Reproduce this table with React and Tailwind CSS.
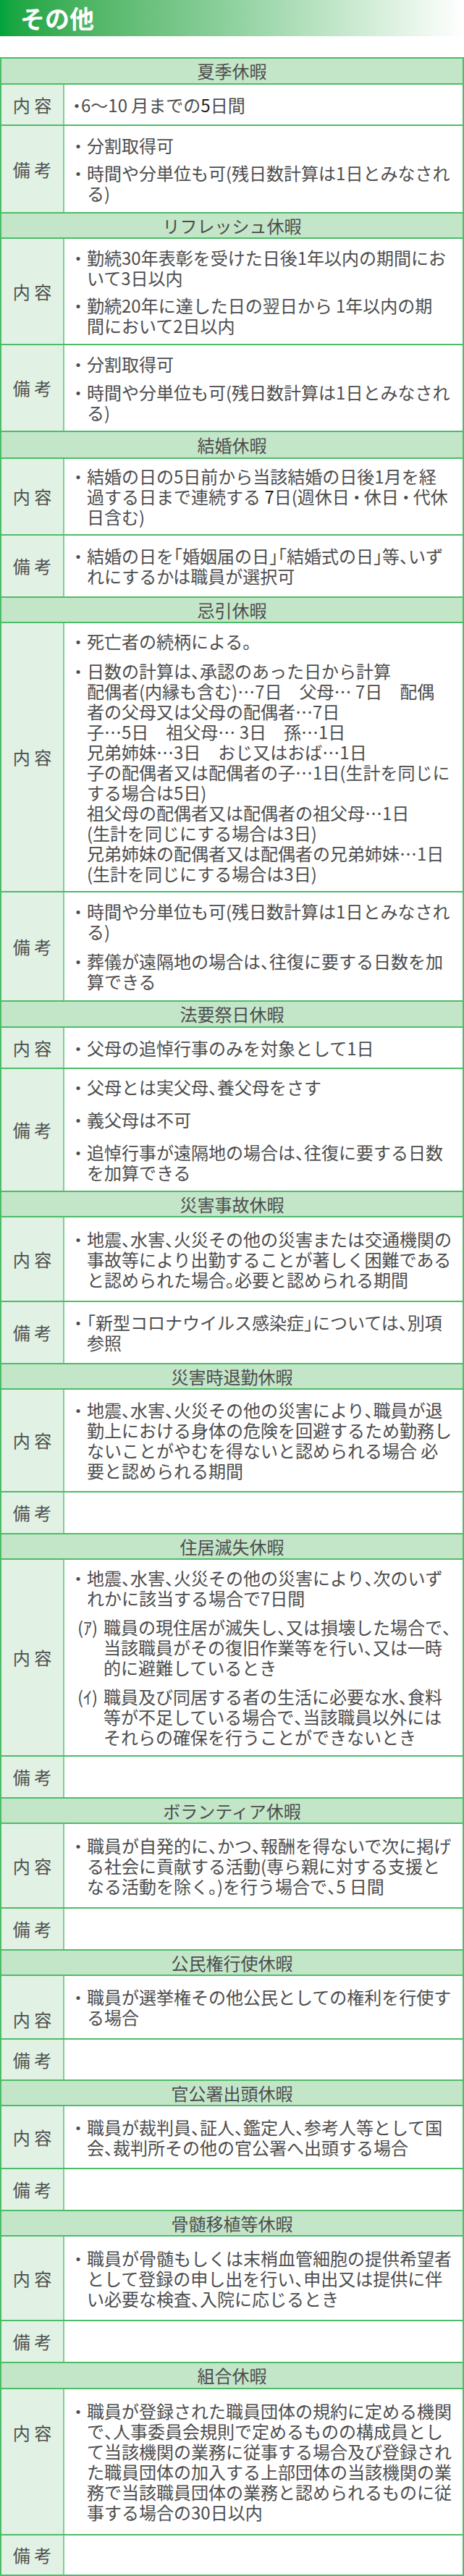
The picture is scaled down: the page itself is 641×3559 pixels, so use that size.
import React from "react";

// punctuation gets half-width (halt) like the original print layout
function fmt(s) {
  if (typeof s !== "string") return s;
  return s.split(/([、。「」・])/).map((p, i) =>
    /^[、。「」・]$/.test(p) ? (
      <span key={i} className="[font-feature-settings:'halt']">
        {p}
      </span>
    ) : (
      p
    )
  );
}

const DARK = "text-[#1f1f1f]";

const remarks = [
  { lines: ["分割取得可"] },
  { lines: ["時間や分単位も可(残日数計算は1日とみなされ", "る)"] },
];

const sections = [
  {
    title: "夏季休暇",
    h: "h-[36px]",
    rows: [
      {
        label: "内 容",
        h: "h-[57px]",
        custom: (
          <div className="flex whitespace-nowrap">
            <span className="-ml-[2px] w-[18px] shrink-0">・</span>
            <span>
              6～10 月までの<span className={DARK}>5</span>日間
            </span>
          </div>
        ),
      },
      { label: "備 考", h: "h-[121px]", gap: "gap-[10px]", items: remarks },
    ],
  },
  {
    title: "リフレッシュ休暇",
    h: "h-[35px]",
    rows: [
      {
        label: "内 容",
        h: "h-[147px]",
        gap: "gap-[10px]",
        items: [
          { lines: ["勤続30年表彰を受けた日後1年以内の期間にお", "いて3日以内"] },
          { lines: ["勤続20年に達した日の翌日から 1年以内の期", "間において2日以内"] },
        ],
      },
      { label: "備 考", h: "h-[120px]", gap: "gap-[11px]", items: remarks },
    ],
  },
  {
    title: "結婚休暇",
    h: "h-[37px]",
    rows: [
      {
        label: "内 容",
        h: "h-[106px]",
        items: [
          {
            lines: [
              "結婚の日の5日前から当該結婚の日後1月を経",
              <>
                過する日まで連続する <span className={DARK}>7</span>日(週休日
                <span className="-mx-[2px]">・</span>休日
                <span className="-mx-[2px]">・</span>代休
              </>,
              "日含む)",
            ],
          },
        ],
      },
      {
        label: "備 考",
        h: "h-[86px]",
        items: [
          {
            lines: [
              "結婚の日を「婚姻届の日」「結婚式の日」等、いず",
              "れにするかは職員が選択可",
            ],
          },
        ],
      },
    ],
  },
  {
    title: "忌引休暇",
    h: "h-[35px]",
    rows: [
      {
        label: "内 容",
        h: "h-[372px]",
        gap: "gap-[13px]",
        items: [
          { lines: ["死亡者の続柄による。"] },
          {
            lines: [
              "日数の計算は、承認のあった日から計算",
              "配偶者(内縁も含む)…7日　父母… 7日　配偶",
              "者の父母又は父母の配偶者…7日",
              "子…5日　祖父母… 3日　孫…1日",
              "兄弟姉妹…3日　おじ又はおば…1日",
              "子の配偶者又は配偶者の子…1日(生計を同じに",
              "する場合は5日)",
              "祖父母の配偶者又は配偶者の祖父母…1日",
              "(生計を同じにする場合は3日)",
              "兄弟姉妹の配偶者又は配偶者の兄弟姉妹…1日",
              "(生計を同じにする場合は3日)",
            ],
          },
        ],
      },
      {
        label: "備 考",
        h: "h-[151px]",
        gap: "gap-[13px]",
        items: [
          remarks[1],
          { lines: ["葬儀が遠隔地の場合は、往復に要する日数を加", "算できる"] },
        ],
      },
    ],
  },
  {
    title: "法要祭日休暇",
    h: "h-[36px]",
    rows: [
      { label: "内 容", h: "h-[57px]", items: [{ lines: ["父母の追悼行事のみを対象として1日"] }] },
      {
        label: "備 考",
        h: "h-[170px]",
        gap: "gap-[17px]",
        items: [
          { lines: ["父母とは実父母、養父母をさす"] },
          { lines: ["義父母は不可"] },
          { lines: ["追悼行事が遠隔地の場合は、往復に要する日数", "を加算できる"] },
        ],
      },
    ],
  },
  {
    title: "災害事故休暇",
    h: "h-[35px]",
    rows: [
      {
        label: "内 容",
        h: "h-[117px]",
        items: [
          {
            lines: [
              "地震、水害、火災その他の災害または交通機関の",
              "事故等により出勤することが著しく困難である",
              "と認められた場合。必要と認められる期間",
            ],
          },
        ],
      },
      {
        label: "備 考",
        h: "h-[86px]",
        items: [{ lines: ["「新型コロナウイルス感染症」については、別項", "参照"] }],
      },
    ],
  },
  {
    title: "災害時退勤休暇",
    h: "h-[35px]",
    rows: [
      {
        label: "内 容",
        h: "h-[142px]",
        items: [
          {
            lines: [
              "地震、水害、火災その他の災害により、職員が退",
              "勤上における身体の危険を回避するため勤務し",
              "ないことがやむを得ないと認められる場合 必",
              "要と認められる期間",
            ],
          },
        ],
      },
      { label: "備 考", h: "h-[58px]" },
    ],
  },
  {
    title: "住居滅失休暇",
    h: "h-[35px]",
    rows: [
      {
        label: "内 容",
        h: "h-[272px]",
        gap: "gap-[12px]",
        items: [
          {
            lines: [
              "地震、水害、火災その他の災害により、次のいず",
              "れかに該当する場合で7日間",
            ],
          },
          {
            mark: "(ｱ)",
            lines: [
              "職員の現住居が滅失し、又は損壊した場合で、",
              "当該職員がその復旧作業等を行い、又は一時",
              "的に避難しているとき",
            ],
          },
          {
            mark: "(ｲ)",
            lines: [
              "職員及び同居する者の生活に必要な水、食料",
              "等が不足している場合で、当該職員以外には",
              "それらの確保を行うことができないとき",
            ],
          },
        ],
      },
      { label: "備 考", h: "h-[58px]" },
    ],
  },
  {
    title: "ボランティア休暇",
    h: "h-[35px]",
    rows: [
      {
        label: "内 容",
        h: "h-[117px]",
        items: [
          {
            lines: [
              "職員が自発的に、かつ、報酬を得ないで次に掲げ",
              "る社会に貢献する活動(専ら親に対する支援と",
              "なる活動を除く。)を行う場合で、5 日間",
            ],
          },
        ],
      },
      { label: "備 考", h: "h-[58px]" },
    ],
  },
  {
    title: "公民権行使休暇",
    h: "h-[35px]",
    rows: [
      {
        label: "内 容",
        h: "h-[88px]",
        labelPad: "pt-[34px]",
        items: [{ lines: ["職員が選挙権その他公民としての権利を行使す", "る場合"] }],
      },
      { label: "備 考", h: "h-[57px]" },
    ],
  },
  {
    title: "官公署出頭休暇",
    h: "h-[35px]",
    rows: [
      {
        label: "内 容",
        h: "h-[87px]",
        items: [
          {
            lines: [
              "職員が裁判員、証人、鑑定人、参考人等として国",
              "会、裁判所その他の官公署へ出頭する場合",
            ],
          },
        ],
      },
      { label: "備 考", h: "h-[58px]" },
    ],
  },
  {
    title: "骨髄移植等休暇",
    h: "h-[35px]",
    rows: [
      {
        label: "内 容",
        h: "h-[117px]",
        items: [
          {
            lines: [
              "職員が骨髄もしくは末梢血管細胞の提供希望者",
              "として登録の申し出を行い、申出又は提供に伴",
              "い必要な検査、入院に応じるとき",
            ],
          },
        ],
      },
      { label: "備 考", h: "h-[58px]" },
    ],
  },
  {
    title: "組合休暇",
    h: "h-[36px]",
    rows: [
      {
        label: "内 容",
        h: "h-[202px]",
        labelPad: "pb-[80px]",
        items: [
          {
            lines: [
              "職員が登録された職員団体の規約に定める機関",
              "で、人事委員会規則で定めるものの構成員とし",
              "て当該機関の業務に従事する場合及び登録され",
              "た職員団体の加入する上部団体の当該機関の業",
              "務で当該職員団体の業務と認められるものに従",
              "事する場合の30日以内",
            ],
          },
        ],
      },
      { label: "備 考", h: "h-[56px]" },
    ],
  },
];

function Item({ item }) {
  return (
    <div className="flex">
      {item.mark ? (
        <span className="w-[47px] shrink-0 whitespace-nowrap pl-[11px]">{item.mark}</span>
      ) : (
        <span className="w-[24px] shrink-0">・</span>
      )}
      <div>
        {item.lines.map((l, i) => (
          <div key={i} className="whitespace-nowrap">
            {fmt(l)}
          </div>
        ))}
      </div>
    </div>
  );
}

function Row({ row }) {
  return (
    <div className={`flex border-t-2 border-[#4cbc68] ${row.h}`}>
      <div
        className={`flex w-[87px] shrink-0 items-center justify-center border-r-2 border-[#7fcf93] bg-[#e1f2e5] ${row.labelPad || ""}`}
      >
        {row.label}
      </div>
      <div
        className={`flex min-w-0 flex-1 flex-col justify-center pl-[7px] pr-[6px] ${row.gap || "gap-[11px]"}`}
      >
        {row.custom}
        {row.items && row.items.map((it, i) => <Item key={i} item={it} />)}
      </div>
    </div>
  );
}

export default function App() {
  return (
    <div className="w-full bg-white font-['Noto_Sans_CJK_JP','Noto_Sans',sans-serif] text-[24px] leading-[28px] text-[#4d4d4d]">
      <div className="flex h-[50px] items-center bg-linear-to-r from-[#00a33c] via-[#8fd19f] via-50% to-white pl-[28px]">
        <h1 className="text-[34px] font-bold leading-none text-white">その他</h1>
      </div>
      <div className="mt-[29px] border-x-2 border-b-2 border-[#4cbc68]">
        {sections.map((s) => (
          <div key={s.title}>
            <div
              className={`flex items-center justify-center border-t-2 border-[#4cbc68] bg-[#c3e6c9] ${s.h}`}
            >
              {s.title}
            </div>
            {s.rows.map((r, i) => (
              <Row key={i} row={r} />
            ))}
          </div>
        ))}
      </div>
    </div>
  );
}
